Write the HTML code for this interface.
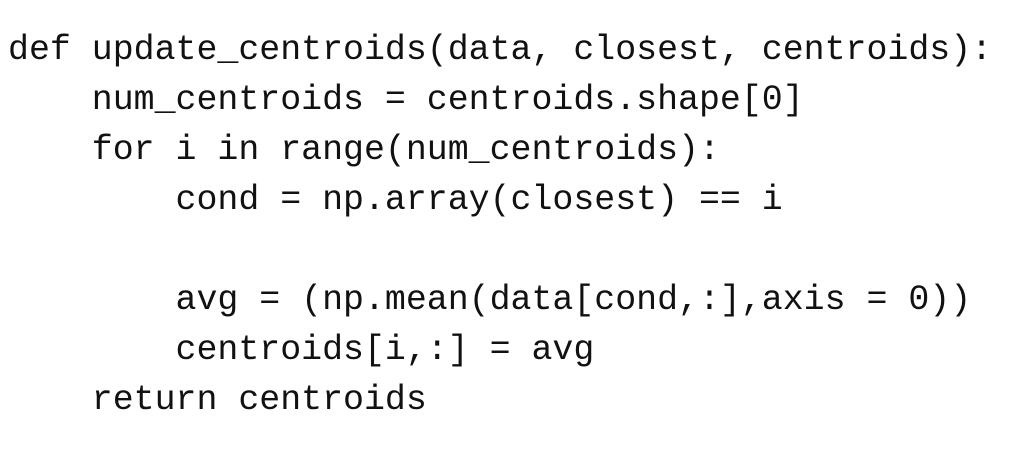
<!DOCTYPE html>
<html><head><meta charset="utf-8"><style>
html,body{margin:0;padding:0;background:#fff;width:1012px;height:476px;overflow:hidden}
pre{margin:0;position:absolute;left:8px;top:26px;font-family:"Liberation Mono",monospace;font-size:34.9px;line-height:50px;color:#111;letter-spacing:0}
</style></head><body>
<pre>def update_centroids(data, closest, centroids):
    num_centroids = centroids.shape[0]
    for i in range(num_centroids):
        cond = np.array(closest) == i

        avg = (np.mean(data[cond,:],axis = 0))
        centroids[i,:] = avg
    return centroids</pre>
</body></html>
